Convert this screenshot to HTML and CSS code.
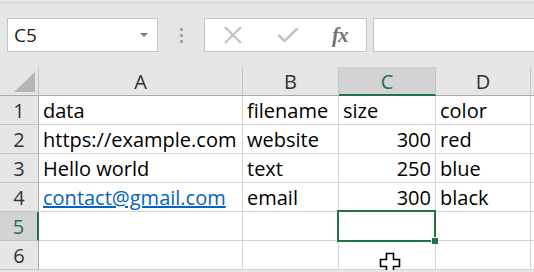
FILE: index.html
```html
<!DOCTYPE html>
<html lang="en">
<head>
    <meta charset="UTF-8">
    <meta name="viewport" content="width=device-width, initial-scale=1.0">
    <title>Sheet1</title>
    <link rel="stylesheet" href="styles.css">
</head>
<body>
    <div class="ribbon-edge"></div>

    <div class="formula-row">
        <div class="name-box">
            <span>C5</span>
            <span class="drop"></span>
        </div>
        <div class="grip">
            <i></i><i></i><i></i>
        </div>
        <div class="fx-buttons">
            <svg class="btn-cancel" width="20" height="18" viewBox="0 0 20 18">
                <path d="M2 1 L18 17 M18 1 L2 17" stroke="#c3c3c3" stroke-width="2.2" fill="none"/>
            </svg>
            <svg class="btn-enter" width="22" height="16" viewBox="0 0 22 16">
                <path d="M1.5 8 L7.5 14 L20.5 1.5" stroke="#c3c3c3" stroke-width="2.6" fill="none"/>
            </svg>
            <span class="fx">fx</span>
        </div>
        <div class="formula-input"></div>
    </div>

    <div class="sheet">
        <!-- header row -->
        <div class="hdr corner"><span class="tri"></span></div>
        <div class="hdr">A</div>
        <div class="hdr">B</div>
        <div class="hdr sel-col">C</div>
        <div class="hdr">D</div>
        <div class="hdr"></div>

        <div class="rowhdr">1</div>
        <div class="cell">data</div>
        <div class="cell">filename</div>
        <div class="cell">size</div>
        <div class="cell">color</div>
        <div class="cell"></div>

        <div class="rowhdr">2</div>
        <div class="cell">https://example.com</div>
        <div class="cell">website</div>
        <div class="cell num">300</div>
        <div class="cell">red</div>
        <div class="cell"></div>

        <div class="rowhdr">3</div>
        <div class="cell">Hello world</div>
        <div class="cell">text</div>
        <div class="cell num">250</div>
        <div class="cell">blue</div>
        <div class="cell"></div>

        <div class="rowhdr">4</div>
        <div class="cell"><a class="link" href="mailto:contact@gmail.com">contact@gmail.com</a></div>
        <div class="cell">email</div>
        <div class="cell num">300</div>
        <div class="cell">black</div>
        <div class="cell"></div>

        <div class="rowhdr sel-row">5</div>
        <div class="cell"></div>
        <div class="cell"></div>
        <div class="cell active"><span class="handle"></span></div>
        <div class="cell"></div>
        <div class="cell"></div>

        <div class="rowhdr">6</div>
        <div class="cell"></div>
        <div class="cell"></div>
        <div class="cell">
            <svg class="cursor" width="22" height="22" viewBox="0 0 22 22">
                <path d="M7.5 1.5 H14.5 V7.5 H20.5 V14.5 H14.5 V20.5 H7.5 V14.5 H1.5 V7.5 H7.5 Z" fill="#fff" stroke="#000" stroke-width="1.6"/>
            </svg>
        </div>
        <div class="cell"></div>
        <div class="cell"></div>
    </div>
</body>
</html>
```

FILE: styles.css
```css
body {
    margin: 0;
    background-color: #e6e6e6;
    font-family: "Open Sans", "Liberation Sans", sans-serif;
    color: #000;
    overflow: hidden;
}
.ribbon-edge {
    height: 2px;
    border-bottom: 1px solid #d4d4d4;
}
.formula-row {
    display: flex;
    align-items: stretch;
    height: 34px;
    margin-top: 15px;
    margin-bottom: 15px;
    padding-left: 7px;
}
.name-box {
    width: 151px;
    box-sizing: border-box;
    background-color: #fff;
    border: 1px solid #c6c6c6;
    display: flex;
    align-items: center;
    justify-content: space-between;
    padding: 0 9px 0 6px;
    font-size: 19px;
    color: #222;
}
.drop {
    width: 0;
    height: 0;
    border-left: 4px solid transparent;
    border-right: 4px solid transparent;
    border-top: 4px solid #7a7a7a;
}
.grip {
    width: 46px;
    display: flex;
    flex-direction: column;
    align-items: center;
    justify-content: center;
    gap: 3px;
}
.grip i {
    display: block;
    width: 3px;
    height: 3px;
    background-color: #a6a6a6;
}
.fx-buttons {
    width: 163px;
    box-sizing: border-box;
    background-color: #fff;
    border: 1px solid #c6c6c6;
    display: flex;
    align-items: center;
    padding-left: 18px;
}
.btn-enter {
    margin-left: 34px;
}
.fx {
    margin-left: 33px;
    font-family: "Liberation Serif", serif;
    font-style: italic;
    font-weight: bold;
    font-size: 21px;
    color: #707070;
    letter-spacing: -1px;
}
.formula-input {
    flex: 1;
    margin-left: 6px;
    background-color: #fff;
    border: 1px solid #c6c6c6;
    border-right: none;
}
.sheet {
    display: grid;
    grid-template-columns: 39px 204px 96px 97px 95px 1fr;
    grid-auto-rows: 29px;
    background-color: #fff;
    font-size: 20px;
}
.sheet > div {
    box-sizing: border-box;
    line-height: 26px;
    padding-top: 2px;
    white-space: nowrap;
}
.hdr {
    background-color: #e6e6e6;
    border-right: 1px solid #c4c4c4;
    border-bottom: 1px solid #ababab;
    text-align: center;
    color: #333;
}
.corner {
    position: relative;
}
.tri {
    position: absolute;
    right: 3px;
    bottom: 3px;
    width: 0;
    height: 0;
    border-left: 21px solid transparent;
    border-bottom: 20px solid #b5b5b5;
}
.sel-col {
    background-color: #d3d3d3;
    color: #217346;
    border-bottom: 2px solid #217346;
}
.rowhdr {
    background-color: #e6e6e6;
    border-right: 1px solid #ababab;
    border-bottom: 1px solid #c4c4c4;
    text-align: center;
    color: #333;
}
.sel-row {
    background-color: #d3d3d3;
    color: #217346;
    border-right: 2px solid #217346;
}
.cell {
    border-right: 1px solid #d4d4d4;
    border-bottom: 1px solid #d4d4d4;
    padding-left: 4px;
    padding-right: 4px;
    overflow: visible;
}
.num {
    text-align: right;
}
.link {
    color: #0563c1;
    text-decoration: underline;
}
.active {
    position: relative;
}
.active::after {
    content: "";
    position: absolute;
    top: -2px;
    left: -2px;
    right: -1px;
    bottom: -2px;
    border: 2px solid #217346;
}
.handle {
    position: absolute;
    right: -3px;
    bottom: -4px;
    width: 6px;
    height: 6px;
    background-color: #217346;
    border-left: 1px solid #fff;
    border-top: 1px solid #fff;
    z-index: 2;
}
.cell .cursor {
    position: relative;
    left: 36px;
    top: 9px;
}
```
